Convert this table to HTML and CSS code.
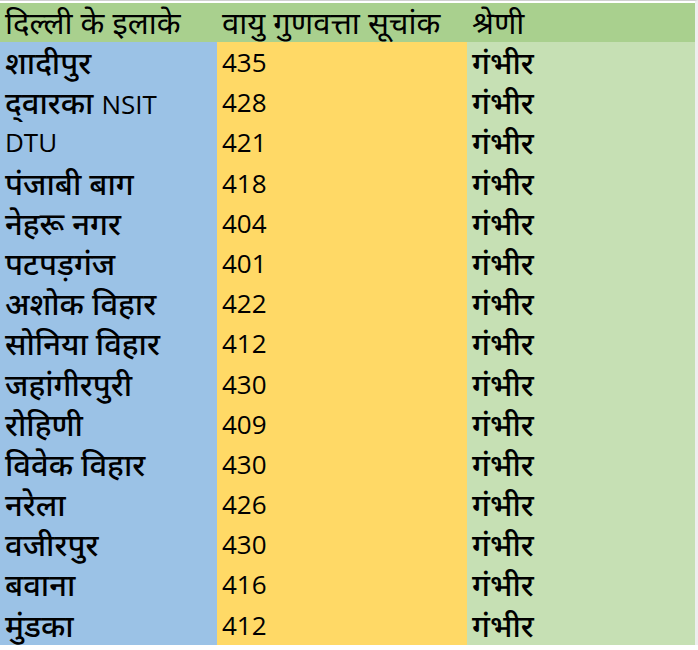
FILE: index.html
```html
<!DOCTYPE html>
<html lang="hi">
<head>
<meta charset="utf-8">
<link rel="stylesheet" href="styles.css">
</head>
<body>
<div class="sheet">
  <div class="row head">
    <div class="cell">दिल्ली के इलाके</div>
    <div class="cell">वायु गुणवत्ता सूचांक</div>
    <div class="cell">श्रेणी</div>
  </div>
  <div class="row"><div class="cell c1">शादीपुर</div><div class="cell c2 num">435</div><div class="cell c3">गंभीर</div></div>
  <div class="row"><div class="cell c1">द्&zwnj;वारका <span class="lat">NSIT</span></div><div class="cell c2 num">428</div><div class="cell c3">गंभीर</div></div>
  <div class="row"><div class="cell c1 num">DTU</div><div class="cell c2 num">421</div><div class="cell c3">गंभीर</div></div>
  <div class="row"><div class="cell c1">पंजाबी बाग</div><div class="cell c2 num">418</div><div class="cell c3">गंभीर</div></div>
  <div class="row"><div class="cell c1">नेहरू नगर</div><div class="cell c2 num">404</div><div class="cell c3">गंभीर</div></div>
  <div class="row"><div class="cell c1">पटपड़गंज</div><div class="cell c2 num">401</div><div class="cell c3">गंभीर</div></div>
  <div class="row"><div class="cell c1">अशोक विहार</div><div class="cell c2 num">422</div><div class="cell c3">गंभीर</div></div>
  <div class="row"><div class="cell c1">सोनिया विहार</div><div class="cell c2 num">412</div><div class="cell c3">गंभीर</div></div>
  <div class="row"><div class="cell c1">जहांगीरपुरी</div><div class="cell c2 num">430</div><div class="cell c3">गंभीर</div></div>
  <div class="row"><div class="cell c1">रोहिणी</div><div class="cell c2 num">409</div><div class="cell c3">गंभीर</div></div>
  <div class="row"><div class="cell c1">विवेक विहार</div><div class="cell c2 num">430</div><div class="cell c3">गंभीर</div></div>
  <div class="row"><div class="cell c1">नरेला</div><div class="cell c2 num">426</div><div class="cell c3">गंभीर</div></div>
  <div class="row"><div class="cell c1">वजीरपुर</div><div class="cell c2 num">430</div><div class="cell c3">गंभीर</div></div>
  <div class="row"><div class="cell c1">बवाना</div><div class="cell c2 num">416</div><div class="cell c3">गंभीर</div></div>
  <div class="row"><div class="cell c1">मुंडका</div><div class="cell c2 num">412</div><div class="cell c3">गंभीर</div></div>
</div>
</body>
</html>
```
FILE: styles.css
```css
html, body {
  margin: 0;
  padding: 0;
  background: #ffffff;
}
body {
  font-family: "Open Sans", "Noto Sans", "Liberation Sans", sans-serif;
  color: #000;
}
.sheet {
  width: 695px;
  padding-top: 2px;
  border-top: 1px solid #d0d0d0;
  border-right: 3px solid #eeeeee;
}
.row {
  display: grid;
  grid-template-columns: 217px 250px 1fr;
  height: 40.2px;
}
.row.head {
  height: 39px;
  background: #a9d08e;
}
.row.head .cell {
  font-weight: 400;
  line-height: 38px;
}
.cell {
  padding-left: 5px;
  font-size: 31px;
  font-weight: 500;
  line-height: 40px;
  white-space: nowrap;
}
.num, .lat {
  font-size: 26px;
  font-weight: 400;
}
.c1 { background: #9bc2e6; }
.c2 { background: #ffd966; }
.c3 { background: #c6e0b4; }
```
